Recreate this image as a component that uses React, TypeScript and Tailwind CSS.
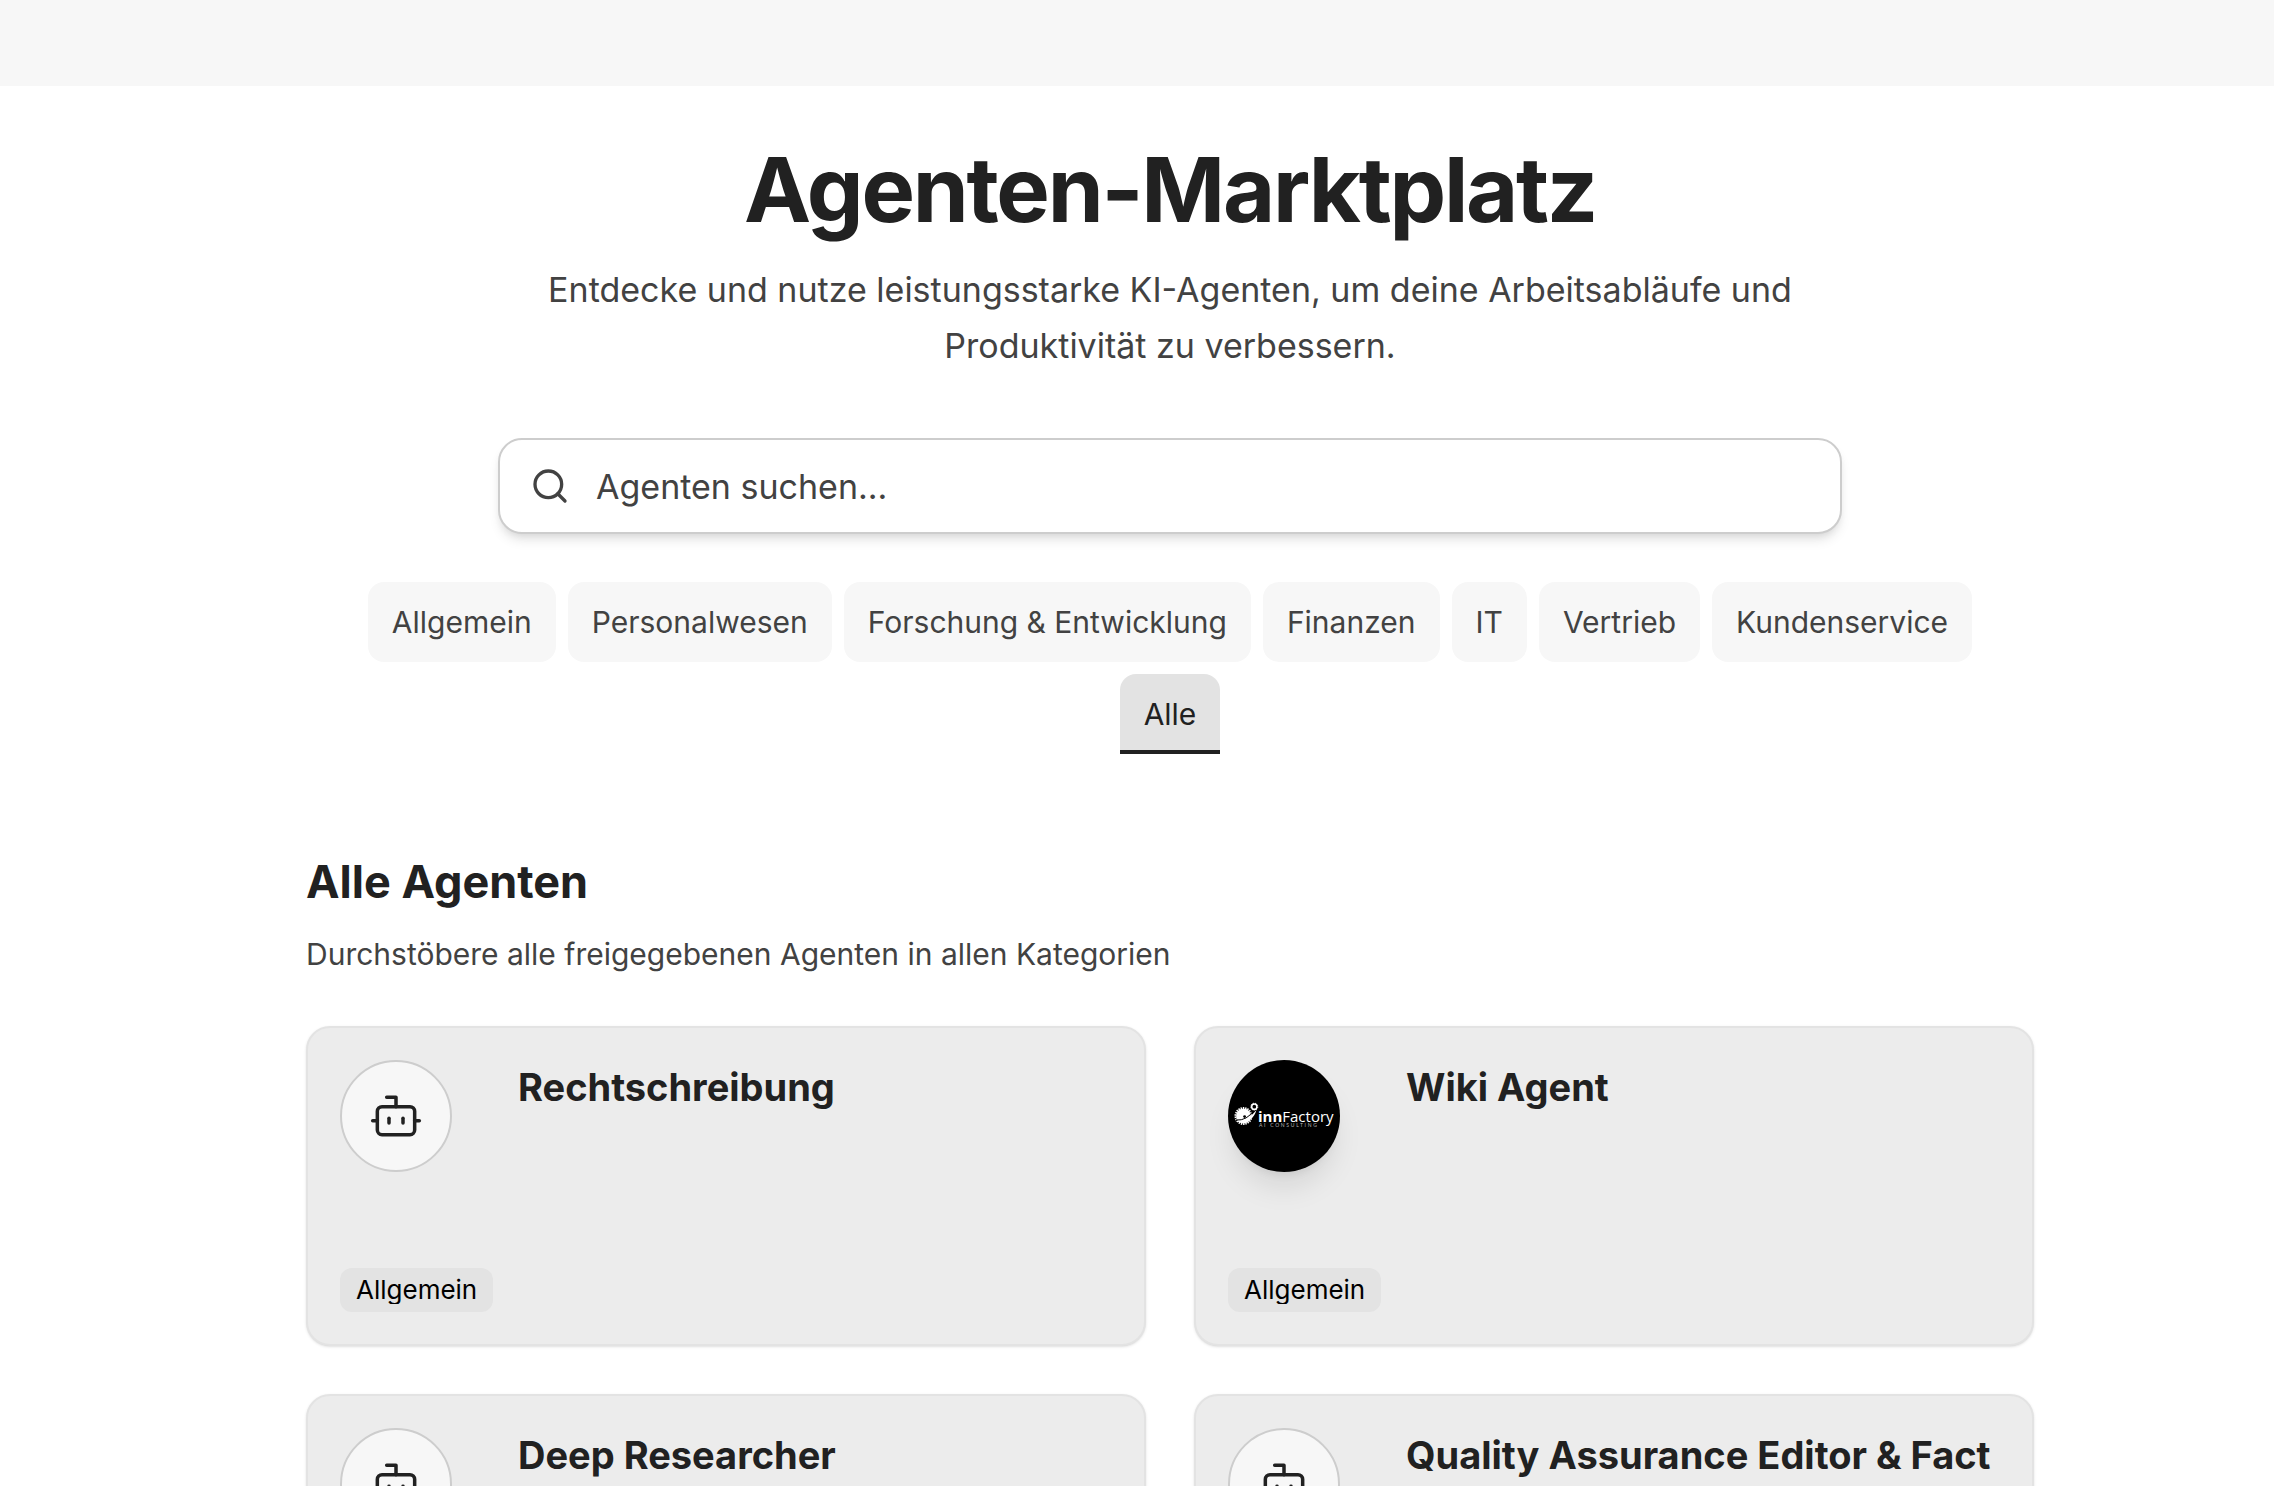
import { useState } from "react";
import type { ReactNode } from "react";
import { Bot, Search } from "lucide-react";

const categories = [
  "Allgemein",
  "Personalwesen",
  "Forschung & Entwicklung",
  "Finanzen",
  "IT",
  "Vertrieb",
  "Kundenservice",
  "Alle",
];

function BotAvatar() {
  return (
    <div className="flex size-28 shrink-0 items-center justify-center rounded-full border-2 border-[#cdcdcd] bg-[#f7f7f7]">
      <Bot size={56} strokeWidth={1.5} aria-hidden="true" />
    </div>
  );
}

function FactoryAvatar() {
  return (
    <div className="size-28 shrink-0 overflow-hidden rounded-full bg-black shadow-[0_20px_30px_-6px_rgba(0,0,0,0.1),0_8px_12px_-8px_rgba(0,0,0,0.1)]">
      <svg viewBox="0 0 112 112" role="img" aria-label="innFactory AI Consulting" className="size-full">
        <circle cx="15.5" cy="56" r="7.4" fill="#fff" />
        <circle cx="15.5" cy="56" r="8" fill="none" stroke="#fff" strokeWidth="2" strokeDasharray="1.4 0.9" />
        <circle cx="16.6" cy="56.6" r="1.4" fill="#000" />
        <path d="M8 60Q19 61 26 50" fill="none" stroke="#000" strokeWidth="1" />
        <path d="M7 61.3Q19.5 61.8 28.5 50Q24 65 7 61.3Z" fill="#fff" />
        <circle cx="26.3" cy="46.7" r="2.6" fill="#000" stroke="#fff" strokeWidth="1.5" />
        <circle cx="26.3" cy="46.7" r="3.5" fill="none" stroke="#fff" strokeWidth="1" strokeDasharray="1.3 1.1" />
        <text x="30" y="61.5" fill="#fff" fontFamily="Open Sans, sans-serif" fontSize="15">
          <tspan fontWeight="700">inn</tspan>
          <tspan>Factory</tspan>
        </text>
        <text x="31" y="66.5" fill="#b5b5b5" fontFamily="Lato, sans-serif" fontSize="5" letterSpacing="1.7">
          AI CONSULTING
        </text>
      </svg>
    </div>
  );
}

function AgentCard({ title, category, avatar }: { title: string; category: string; avatar: ReactNode }) {
  return (
    <article className="flex h-80 flex-col justify-between rounded-3xl border-2 border-[#e3e3e3] bg-[#ececec] p-8 shadow-sm">
      <div className="flex gap-[66px]">
        {avatar}
        <h3 className="text-[38px] leading-[54px] font-bold">{title}</h3>
      </div>
      <span className="flex h-11 items-center self-start rounded-xl bg-[#e3e3e3] px-4 text-[26px] text-black">
        <span className="overflow-hidden leading-7">{category}</span>
      </span>
    </article>
  );
}

export default function App() {
  const [active, setActive] = useState("Alle");
  return (
    <div className="h-screen overflow-hidden bg-white font-[Inter,sans-serif] text-[#212121]">
      <header className="h-[86px] bg-[#f7f7f7]" />
      <main className="pl-[66px]">
        <div className="mx-auto flex w-full max-w-[1728px] flex-col pt-14">
          <div className="flex flex-col items-center text-center">
            <h1 className="text-[90px] leading-[96px] font-bold tracking-tight">Agenten-Marktplatz</h1>
            <p className="mt-6 max-w-[1344px] text-[34px] leading-[56px] text-[#424242]">
              Entdecke und nutze leistungsstarke KI-Agenten, um deine Arbeitsabläufe und Produktivität zu verbessern.
            </p>
            <label className="mt-16 flex h-24 w-full max-w-[1344px] items-center gap-[26px] rounded-3xl border-2 border-[#cdcdcd] bg-white px-[30px] text-[#424242] shadow-[0_8px_12px_-2px_rgba(0,0,0,0.1),0_4px_8px_-4px_rgba(0,0,0,0.1)]">
              <Search size={40} strokeWidth={2} aria-hidden="true" />
              <input
                type="text"
                aria-label="Agenten suchen"
                placeholder="Agenten suchen..."
                className="h-full min-w-0 flex-1 bg-transparent text-[34px] outline-none placeholder:text-[#424242]"
              />
            </label>
            <div className="mt-12 flex w-full max-w-[1632px] flex-wrap justify-center gap-3">
              {categories.map((c) => (
                <button
                  key={c}
                  type="button"
                  onClick={() => setActive(c)}
                  className={
                    c === active
                      ? "h-20 rounded-t-2xl border-b-4 border-[#212121] bg-[#e3e3e3] px-6 pt-1 text-[30px]"
                      : "h-20 rounded-2xl bg-[#f7f7f7] px-6 text-[30px] text-[#424242]"
                  }
                >
                  {c}
                </button>
              ))}
            </div>
          </div>
          <h2 className="mt-24 text-[45px] leading-[64px] font-bold">Alle Agenten</h2>
          <p className="mt-4 text-[30px] leading-[48px] text-[#424242]">
            Durchstöbere alle freigegebenen Agenten in allen Kategorien
          </p>
          <div className="mt-12 grid grid-cols-2 gap-12">
            <AgentCard title="Rechtschreibung" category="Allgemein" avatar={<BotAvatar />} />
            <AgentCard title="Wiki Agent" category="Allgemein" avatar={<FactoryAvatar />} />
            <AgentCard title="Deep Researcher" category="Allgemein" avatar={<BotAvatar />} />
            <AgentCard title="Quality Assurance Editor & Fact" category="Allgemein" avatar={<BotAvatar />} />
          </div>
        </div>
      </main>
    </div>
  );
}
